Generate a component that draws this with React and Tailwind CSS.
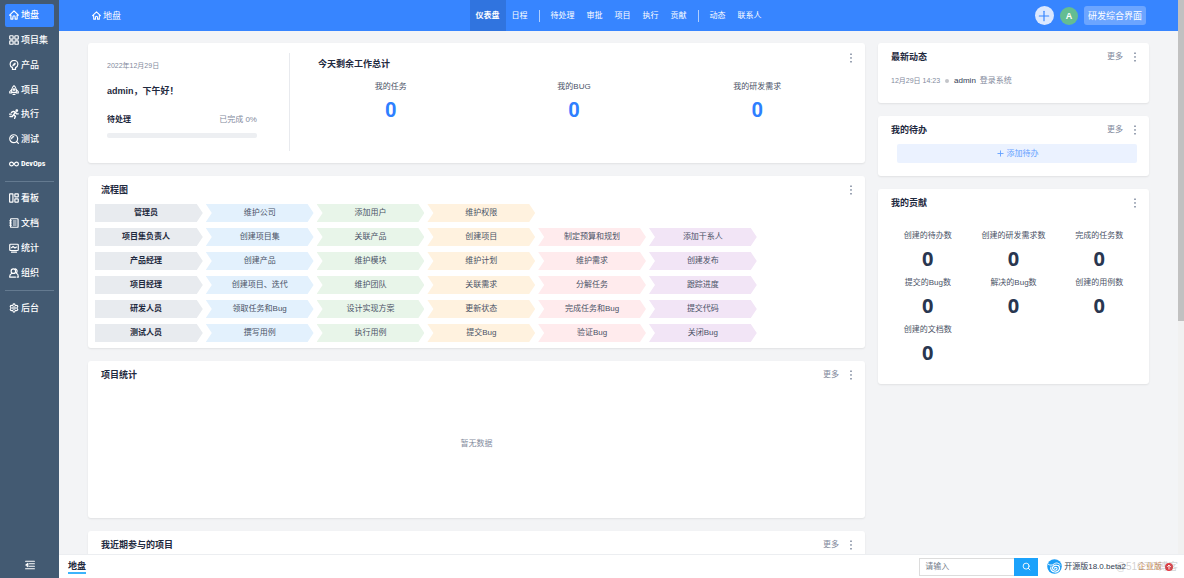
import React from 'react';
import { Plus, Search, Settings } from 'lucide-react';

function cn(...classes) {
  return classes.filter(Boolean).join(' ');
}

function Icon({ className, children }) {
  return (
    <svg
      viewBox="0 0 16 16"
      fill="none"
      stroke="currentColor"
      strokeWidth="1.9"
      strokeLinecap="round"
      strokeLinejoin="round"
      aria-hidden="true"
      className={cn('shrink-0', className || 'w-[10px] h-[10px]')}
    >
      {children}
    </svg>
  );
}

const icons = {
  home: <path d="M1 8.2 8 1.5l7 6.7h-2V14.5H9.8V11a1.8 1.8 0 0 0-3.6 0v3.5H3V8.2z" />,
  program: (
    <>
      <rect x="1.2" y="1.2" width="5.4" height="5.4" rx="1" />
      <rect x="9.4" y="1.2" width="5.4" height="5.4" rx="1" />
      <rect x="1.2" y="9.4" width="5.4" height="5.4" rx="1" />
      <rect x="9.4" y="9.4" width="5.4" height="5.4" rx="1" />
    </>
  ),
  product: (
    <>
      <path d="M5.5 12.2C3 11 1.8 8.8 1.8 6.8a6.2 6.2 0 0 1 12.4 0c0 2-1.2 4.2-3.7 5.4V15h-5z" />
      <path d="M6.200 9.300C6 6.800 7.500 5.200 10.200 4.800 10.200 7.500 9 9 6.200 9.300z" fill="currentColor" strokeWidth="1" />
    </>
  ),
  project: (
    <>
      <path d="M8 1C5.2 3 4.3 5.800 4.300 8v3.800h7.400V8C11.700 5.800 10.800 3 8 1z" />
      <path d="M4.300 7.500 1.200 10.500v2.300h3.100M11.700 7.500l3.100 3v2.300h-3.100M6.500 15h3" />
      <circle cx="8" cy="7.300" r="1.300" />
    </>
  ),
  execution: (
    <>
      <circle cx="12.500" cy="2.500" r="1.300" fill="currentColor" />
      <path
        d="M4 5.500 7 3.800l3.300 1.400-3 3.800 3 2.500L9 15M10.300 5.200l1.700 2.500h2.800M7.300 9l-2 3H1.500M1 8.200h2.500"
        strokeWidth="2.200"
      />
    </>
  ),
  qa: (
    <>
      <circle cx="7.500" cy="7.500" r="6.300" />
      <path d="m12 12 3 3M4.300 7.500a3.200 3.200 0 0 1 3.200-3.200" />
    </>
  ),
  devops: (
    <path d="M8 8C6.500 5.800 5.500 4.900 4.100 4.900a3.100 3.100 0 0 0 0 6.200C5.500 11.100 6.500 10.200 8 8s2.500-3.100 3.900-3.100a3.100 3.100 0 0 1 0 6.200C10.500 11.100 9.500 10.200 8 8z" />
  ),
  kanban: (
    <>
      <rect x="1" y="1.300" width="5.300" height="13.400" rx="0.600" />
      <rect x="9.400" y="1.300" width="5.400" height="5" rx="0.600" />
      <rect x="9.400" y="9.300" width="5.400" height="5.400" rx="0.600" />
    </>
  ),
  doc: (
    <>
      <rect x="2.500" y="1.200" width="12" height="13.600" rx="1" />
      <path d="M1 4.500h3M1 8h3M1 11.500h3M7 4.800h4.500M7 8h4.500M7 11.200h4.500" strokeWidth="1.500" />
    </>
  ),
  report: (
    <>
      <rect x="1.200" y="2" width="13.600" height="10" rx="1.200" />
      <path d="M4 7.500 6.500 5.500l3 2.500L12 6.500M4 14.700h8" />
    </>
  ),
  team: (
    <>
      <circle cx="7" cy="5" r="3.600" />
      <path d="M4.500 8.500C2.300 9.500 1 11.500 1 14.500h9.500M10 1.500a3.600 3.600 0 0 1 1.500 6.500c2.200 1 3.500 3.300 3.500 6.500h-2" />
    </>
  ),
};

const menuGroups = [
  {
    id: 'work',
    height: 'h-[173px]',
    items: [
      { id: 'home', label: '地盘', active: true },
      { id: 'program', label: '项目集' },
      { id: 'product', label: '产品' },
      { id: 'project', label: '项目' },
      { id: 'execution', label: '执行' },
      { id: 'qa', label: '测试' },
      { id: 'devops', label: 'DevOps' },
    ],
  },
  {
    id: 'manage',
    height: 'h-[99px]',
    items: [
      { id: 'kanban', label: '看板' },
      { id: 'doc', label: '文档' },
      { id: 'report', label: '统计' },
      { id: 'team', label: '组织' },
    ],
  },
  {
    id: 'system',
    height: 'h-[25px]',
    items: [{ id: 'admin', label: '后台' }],
  },
];

const navGroups = [
  ['仪表盘', '日程'],
  ['待处理', '审批', '项目', '执行', '贡献'],
  ['动态', '联系人'],
];

const flowRows = [
  ['管理员', '维护公司', '添加用户', '维护权限'],
  ['项目集负责人', '创建项目集', '关联产品', '创建项目', '制定预算和规划', '添加干系人'],
  ['产品经理', '创建产品', '维护模块', '维护计划', '维护需求', '创建发布'],
  ['项目经理', '创建项目、迭代', '维护团队', '关联需求', '分解任务', '跟踪进度'],
  ['研发人员', '领取任务和Bug', '设计实现方案', '更新状态', '完成任务和Bug', '提交代码'],
  ['测试人员', '撰写用例', '执行用例', '提交Bug', '验证Bug', '关闭Bug'],
];

const flowColors = [
  'bg-[#e8ebef] font-bold text-[#1f2a40]',
  'bg-[#e3f1fd]',
  'bg-[#e8f5e9]',
  'bg-[#fff2df]',
  'bg-[#ffebed]',
  'bg-[#f2e5f6]',
];

const contributions = [
  '创建的待办数',
  '创建的研发需求数',
  '完成的任务数',
  '提交的Bug数',
  '解决的Bug数',
  '创建的用例数',
  '创建的文档数',
];

function Sidebar() {
  return (
    <aside className="flex w-[59px] shrink-0 flex-col bg-[#435a72] px-[5px] pt-[3px] text-white">
      <nav aria-label="主菜单">
        {menuGroups.map((group, idx) => (
          <ul
            key={group.id}
            className={cn('flex flex-col', group.height, idx > 0 && 'mt-[5px] box-content border-t border-[#647a90] pt-[4px]')}
          >
            {group.items.map((item) => (
              <li key={item.id} className="flex flex-1 items-center">
                <a
                  href={`#${item.id}`}
                  className={cn(
                    'flex h-[23px] w-full items-center gap-[2px] rounded-[2px] pl-[4px]',
                    'text-[9px] font-medium whitespace-nowrap',
                    item.active && 'bg-[#3785ff]',
                  )}
                >
                  {item.id === 'admin' ? (
                    <Settings className="w-[10px] h-[10px] shrink-0" strokeWidth={2.8} />
                  ) : (
                    <Icon>{icons[item.id]}</Icon>
                  )}
                  <span className={item.id === 'devops' ? "font-['Roboto_Condensed','Open_Sans_Condensed',Roboto,sans-serif] text-[8px] font-bold" : ''}>
                    {item.label}
                  </span>
                </a>
              </li>
            ))}
          </ul>
        ))}
      </nav>
      <button type="button" aria-label="收起菜单" className="mx-auto mt-auto mb-[8px]">
        <Icon className="h-[10px] w-[10px]">
          <path d="M1 2h14M7 6h8M7 10h8M1 14h14M4.500 5.500 1.500 8l3 2.500z" />
        </Icon>
      </button>
    </aside>
  );
}

function TopBar() {
  return (
    <header className="grid h-[31px] shrink-0 grid-cols-[1fr_auto_1fr] items-center bg-[#3785ff] text-white">
      <a href="#home" className="flex items-center gap-[2px] pl-[33px] text-[9px]">
        <Icon className="h-[9px] w-[9px]">{icons.home}</Icon>
        地盘
      </a>
      <nav aria-label="地盘导航" className="flex h-full items-center">
        {navGroups.map((group, idx) => (
          <React.Fragment key={group[0]}>
            {idx > 0 && <span className="mx-[5px] h-[12px] w-px bg-white/60" />}
            {group.map((label) => (
              <a
                key={label}
                href={`#${label}`}
                className={cn('flex h-full items-center px-[6px]', label === '仪表盘' && 'bg-[#3074df] font-bold')}
              >
                {label}
              </a>
            ))}
          </React.Fragment>
        ))}
      </nav>
      <div className="flex items-center justify-end gap-[6px] pr-[32px]">
        <button
          type="button"
          aria-label="新增"
          className="flex h-[19px] w-[19px] items-center justify-center rounded-full bg-[#dbe8ff] text-[#3785ff]"
        >
          <Plus className="h-[16px] w-[16px]" strokeWidth={1.8} />
        </button>
        <button
          type="button"
          className="flex h-[18px] w-[18px] items-center justify-center rounded-full bg-[#64bd92] text-[9px] font-bold"
        >
          A
        </button>
        <button type="button" className="h-[19px] rounded-[3px] bg-[#6ca5ff] px-[4px] text-[9px] whitespace-nowrap">
          研发综合界面
        </button>
      </div>
    </header>
  );
}

function MoreDots() {
  return (
    <button type="button" aria-label="更多操作" className="flex w-[4px] justify-center text-[#6f7c93]">
      <svg viewBox="0 0 2 10" fill="currentColor" className="h-[10px] w-[2px]" aria-hidden="true">
        <rect x="0.300" y="0.500" width="1.400" height="1.500" />
        <rect x="0.300" y="4.200" width="1.400" height="1.500" />
        <rect x="0.300" y="8" width="1.400" height="1.500" />
      </svg>
    </button>
  );
}

function Card({ title, more, children }) {
  return (
    <section className="rounded-[3px] bg-white shadow-[0_1px_2px_rgba(0,0,0,0.08)]">
      {title && (
        <div className="flex h-[28px] items-center gap-[10px] pr-[12px] pl-[13px]">
          <h2 className="mr-auto text-[9px] font-bold text-[#1f2a40]">{title}</h2>
          {more && <a href="#more" className="text-[#838a9d]">更多</a>}
          <MoreDots />
        </div>
      )}
      {children}
    </section>
  );
}

function Welcome() {
  return (
    <Card>
      <div className="flex pt-[10px] pr-[8px] pb-[12px]">
        <div className="w-[202px] shrink-0 border-r border-[#e8eaee] pt-[7px] pr-[32px] pb-[13px] pl-[19px]">
          <p className="text-[7px] leading-[12px] text-[#838a9d]">2022年12月29日</p>
          <p className="mt-[13px] text-[9px] font-bold text-[#1f2a40]">admin，下午好！</p>
          <div className="mt-[17px] flex justify-between">
            <span className="font-bold text-[#1f2a40]">待处理</span>
            <span className="text-[#838a9d]">已完成 0%</span>
          </div>
          <div className="mt-[7px] h-[5px] rounded-[2px] bg-[#edeff2]" />
        </div>
        <div className="flex-1 pt-[5px] pl-[9px]">
          <h2 className="pl-[19px] text-[9px] font-bold text-[#1f2a40]">今天剩余工作总计</h2>
          <dl className="mt-[11px] grid grid-cols-3 text-center">
            {['我的任务', '我的BUG', '我的研发需求'].map((label) => (
              <div key={label}>
                <dt>{label}</dt>
                <dd className="mt-[5px] font-[Roboto,sans-serif] text-[20px] leading-[24px] font-bold text-[#2e7fff]">0</dd>
              </div>
            ))}
          </dl>
        </div>
        <div className="w-[8px]">
          <MoreDots />
        </div>
      </div>
    </Card>
  );
}

function Flowchart() {
  return (
    <Card title="流程图">
      <div className="flex flex-col gap-[6px] pb-[6px] pl-[7px]">
        {flowRows.map((row) => (
          <div key={row[0]} className="flex gap-[3px]">
            {row.map((step, idx) => (
              <div
                key={step}
                className={cn(
                  'flex h-[18px] w-[14%] items-center justify-center whitespace-nowrap',
                  idx === 0
                    ? 'pr-[6px] [clip-path:polygon(0_0,calc(100%_-_6px)_0,100%_50%,calc(100%_-_6px)_100%,0_100%)]'
                    : '[clip-path:polygon(0_0,calc(100%_-_6px)_0,100%_50%,calc(100%_-_6px)_100%,0_100%,6px_50%)]',
                  flowColors[idx],
                )}
              >
                {step}
              </div>
            ))}
          </div>
        ))}
      </div>
    </Card>
  );
}

function SideCards() {
  return (
    <div className="flex flex-col gap-[13px]">
      <Card title="最新动态" more>
        <p className="flex items-center px-[13px] pt-[4px] pb-[16px] text-[#838a9d]">
          <time className="text-[7px] leading-[12px]">12月29日 14:23</time>
          <span className="mx-[5px] h-[4px] w-[4px] rounded-full bg-[#c3c5c9]" />
          <a href="#admin-user" className="mr-[4px] text-[#313c52]">admin</a>
          登录系统
        </p>
      </Card>
      <Card title="我的待办" more>
        <div className="pr-[12px] pb-[13px] pl-[19px]">
          <button
            type="button"
            className="flex h-[19px] w-full items-center justify-center gap-[2px] rounded-[2px] bg-[#ebf2ff] text-[#64a0ff]"
          >
            <Plus className="h-[9px] w-[9px]" strokeWidth={2.4} />
            添加待办
          </button>
        </div>
      </Card>
      <Card title="我的贡献">
        <dl className="grid grid-cols-3 gap-y-[5px] px-[7px] pt-[13px] pb-[18px] text-center whitespace-nowrap">
          {contributions.map((label) => (
            <div key={label}>
              <dt>{label}</dt>
              <dd className="mt-[5px] pb-px font-['Noto_Sans',sans-serif] text-[20px] leading-[24px] font-bold text-[#293650]">0</dd>
            </div>
          ))}
        </dl>
      </Card>
    </div>
  );
}

function ZentaoLogo() {
  return (
    <svg viewBox="0 0 30 30" className="h-[15px] w-[15px] shrink-0" aria-hidden="true">
      <circle cx="15" cy="15" r="14.500" fill="#1b9df5" />
      <path d="M2 10c4 3 8 3 12 0s8-3 13 2" fill="none" stroke="#fff" strokeWidth="2" />
      <path
        d="M21 13c-5-2-10 1-10 5 0 5 7 6 9 2 1-3-3-4-5-2M23 13c5 6 0 14-8 13-6-1-9-6-7-10"
        fill="none"
        stroke="#fff"
        strokeWidth="2.400"
        strokeLinecap="round"
      />
    </svg>
  );
}

function Footer() {
  return (
    <footer className="relative flex h-[24px] shrink-0 items-center border-t border-[#eceef1] bg-white pl-[9px]">
      <a href="#home" className="border-b-2 border-[#3cb4fb] text-[9px] font-bold text-[#1f2a40]">地盘</a>
      <form className="ml-auto flex h-[18px]" onSubmit={(e) => e.preventDefault()}>
        <input
          type="text"
          aria-label="搜索"
          placeholder="请输入"
          className="w-[95px] border border-r-0 border-[#dcdcdc] px-[5px] placeholder:text-[#747b8a] focus:outline-none"
        />
        <button type="submit" aria-label="搜索" className="flex w-[24px] items-center justify-center bg-[#1ba2fb] text-white">
          <Search className="h-[9px] w-[9px]" strokeWidth={2.4} />
        </button>
      </form>
      <a href="#version" className="ml-[9px] flex items-center gap-[2px] whitespace-nowrap text-[#313c52]">
        <ZentaoLogo />
        开源版18.0.beta2
      </a>
      <a href="#upgrade" className="mr-[11px] ml-[12px] flex items-center gap-[3px] whitespace-nowrap text-[#c9844f]">
        企业版
        <svg viewBox="0 0 16 16" className="h-[8px] w-[8px]" aria-hidden="true">
          <circle cx="8" cy="8" r="8" fill="#e5353e" />
          <path d="M8 13V4M4.500 7.500 8 4l3.500 3.500" fill="none" stroke="#fff" strokeWidth="2" />
        </svg>
      </a>
      <span className="pointer-events-none absolute right-[6px] text-[10px] text-[#8c8c8c]/40">@51CTO博客</span>
    </footer>
  );
}

export default function App() {
  return (
    <div className="flex h-screen overflow-hidden bg-[#f3f4f6] font-['Liberation_Sans','Noto_Sans_CJK_SC',sans-serif] text-[8px] leading-[12px] text-[#4a5266]">
      <Sidebar />
      <div className="flex min-w-0 flex-1 flex-col">
        <div className="flex min-h-0 flex-1">
          <div className="flex min-w-0 flex-1 flex-col">
            <TopBar />
            <main className="grid min-h-0 flex-1 grid-cols-[1fr_271px] items-start gap-[13px] overflow-hidden px-[29px] pt-[12px]">
              <div className="flex flex-col gap-[13px]">
                <Welcome />
                <Flowchart />
                <Card title="项目统计" more>
                  <p className="flex h-[129px] items-center justify-center pb-[20px] text-[#838a9d]">暂无数据</p>
                </Card>
                <Card title="我近期参与的项目" more />
              </div>
              <SideCards />
            </main>
          </div>
          {/* Page scroll track */}
          <div className="w-[6px] shrink-0 bg-[#f1f1f1]">
            <div className="h-[58%] bg-[#c1c1c1]" />
          </div>
        </div>
        <Footer />
      </div>
    </div>
  );
}
